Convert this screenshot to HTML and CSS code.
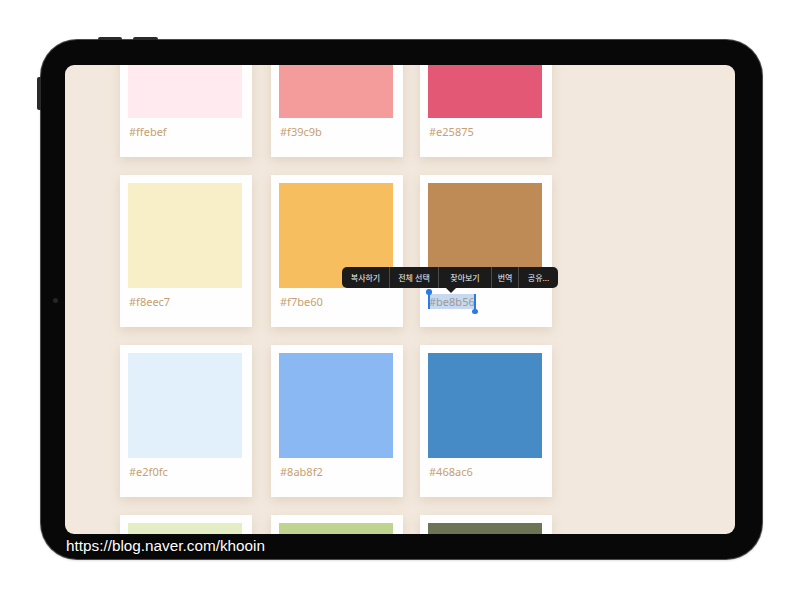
FILE: index.html
```html
<!DOCTYPE html>
<html lang="ko">
<head>
<meta charset="utf-8">
<title>Palette</title>
<link rel="stylesheet" href="styles.css">
</head>
<body>
<div class="device">
  <span class="btn-top btn-top-1"></span>
  <span class="btn-top btn-top-2"></span>
  <span class="btn-side"></span>
  <span class="camera"></span>
  <div class="screen">
    <div class="grid">
      <div class="card"><div class="swatch" style="background:#ffebef"></div><div class="label">#ffebef</div></div>
      <div class="card"><div class="swatch" style="background:#f39c9b"></div><div class="label">#f39c9b</div></div>
      <div class="card"><div class="swatch" style="background:#e25875"></div><div class="label">#e25875</div></div>

      <div class="card"><div class="swatch" style="background:#f8eec7"></div><div class="label">#f8eec7</div></div>
      <div class="card"><div class="swatch" style="background:#f7be60"></div><div class="label">#f7be60</div></div>
      <div class="card"><div class="swatch" style="background:#be8b56"></div><div class="label"><span class="selected">#be8b56<i class="handle handle-start"></i><i class="handle handle-end"></i></span></div></div>

      <div class="card"><div class="swatch" style="background:#e2f0fc"></div><div class="label">#e2f0fc</div></div>
      <div class="card"><div class="swatch" style="background:#8ab8f2"></div><div class="label">#8ab8f2</div></div>
      <div class="card"><div class="swatch" style="background:#468ac6"></div><div class="label">#468ac6</div></div>

      <div class="card"><div class="swatch" style="background:#e4edc3"></div></div>
      <div class="card"><div class="swatch" style="background:#bfd58f"></div></div>
      <div class="card"><div class="swatch" style="background:#6c7456"></div></div>
    </div>

    <div class="menu">
      <span class="menu-item w1">복사하기</span>
      <span class="menu-item w2">전체 선택</span>
      <span class="menu-item w3">찾아보기</span>
      <span class="menu-item w4">번역</span>
      <span class="menu-item w5">공유...</span>
      <span class="menu-tip"></span>
    </div>
  </div>
</div>
<div class="watermark">https://blog.naver.com/khooin</div>
</body>
</html>
```

FILE: styles.css
```css
html, body {
  margin: 0;
  padding: 0;
  background: #ffffff;
}

body {
  width: 800px;
  height: 600px;
  position: relative;
  overflow: hidden;
  font-family: "Noto Sans", "Noto Sans CJK KR", sans-serif;
}

.device {
  position: relative;
  box-sizing: border-box;
  margin: 40px 0 0 41px;
  width: 721px;
  height: 519px;
  padding: 25px 27px 25px 24px;
  background: #080808;
  border-radius: 36px;
  box-shadow: 0 0 0 1px #4a4a4a, 0 1px 3px rgba(0, 0, 0, 0.25);
}

.btn-top {
  position: absolute;
  top: -3px;
  height: 3px;
  background: #2a2a2a;
  border-radius: 2px 2px 0 0;
}
.btn-top-1 { left: 57px; width: 24px; }
.btn-top-2 { left: 92px; width: 25px; }

.btn-side {
  position: absolute;
  left: -4px;
  top: 37px;
  width: 4px;
  height: 33px;
  background: #2a2a2a;
  border-radius: 2px 0 0 2px;
}

.camera {
  position: absolute;
  left: 12px;
  top: 258px;
  width: 5px;
  height: 5px;
  border-radius: 50%;
  background: #262626;
}

.screen {
  position: relative;
  width: 670px;
  height: 469px;
  border-radius: 9px;
  overflow: hidden;
  background: #f2e8dd;
}

.grid {
  display: grid;
  grid-template-columns: 132px 132px 132px;
  grid-auto-rows: 152px;
  row-gap: 18px;
  column-gap: 18px;
  margin: -60px 0 0 55px;
}

.card {
  box-sizing: border-box;
  padding: 8px 10px 0 8px;
  background: #fefefe;
  box-shadow: 0 4px 10px rgba(170, 140, 100, 0.22);
}

.card:nth-child(3n+2) {
  margin-left: 1px;
  margin-right: -1px;
}

.swatch {
  width: 114px;
  height: 105px;
}

.label {
  margin-top: 6px;
  padding-left: 1px;
  font-size: 11px;
  line-height: 16px;
  color: #c79f71;
}

.selected {
  position: relative;
  background: #c6d9f0;
  color: #9d9a98;
}

.handle {
  position: absolute;
  width: 1.5px;
  background: #2a7be4;
}
.handle::after {
  content: "";
  position: absolute;
  left: -2px;
  width: 5.5px;
  height: 5.5px;
  border-radius: 50%;
  background: #2a7be4;
}
.handle-start {
  left: -1px;
  top: -2px;
  bottom: 0;
}
.handle-start::after { top: -3px; }
.handle-end {
  right: -1px;
  top: 0;
  bottom: -2px;
}
.handle-end::after { bottom: -3px; }

.menu {
  position: absolute;
  left: 277px;
  top: 202px;
  height: 21px;
  display: flex;
  align-items: center;
  background: #1b1b1b;
  border-radius: 5px;
  font-family: "Noto Sans CJK KR", sans-serif;
  font-size: 8px;
  color: #f2f2f2;
}

.menu-item {
  height: 21px;
  line-height: 21px;
  text-align: center;
  border-left: 1px solid #4a4a4a;
}
.menu-item.w1 { width: 47px; border-left: none; }
.menu-item.w2 { width: 48px; }
.menu-item.w3 { width: 52px; }
.menu-item.w4 { width: 26px; }
.menu-item.w5 { width: 39px; }

.menu-tip {
  position: absolute;
  left: 104px;
  bottom: -5px;
  width: 0;
  height: 0;
  border-left: 5px solid transparent;
  border-right: 5px solid transparent;
  border-top: 5px solid #1b1b1b;
}

.watermark {
  position: absolute;
  left: 66px;
  top: 537px;
  font-family: "Liberation Sans", Arial, sans-serif;
  font-size: 15.3px;
  color: #ffffff;
  text-shadow: 0 0 2px #000, 0 0 1px #000;
  white-space: nowrap;
}
```
